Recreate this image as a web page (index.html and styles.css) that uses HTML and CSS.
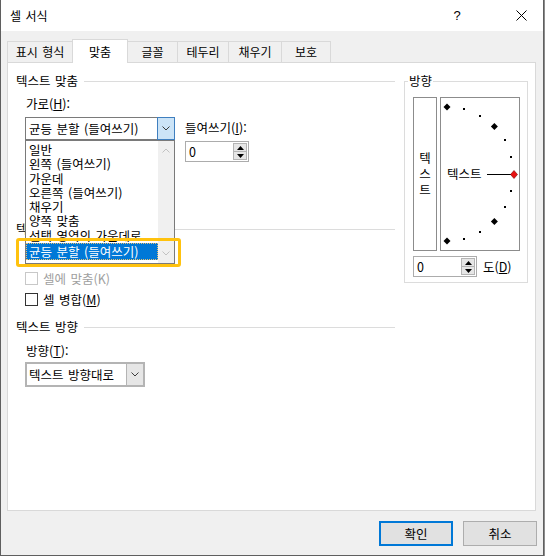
FILE: index.html
```html
<!DOCTYPE html>
<html lang="ko">
<head>
<meta charset="utf-8">
<title>셀 서식</title>
<link rel="stylesheet" href="styles.css">
</head>
<body>
<div class="window">
  <div class="titlebar">
    <span class="title">셀 서식</span>
    <span class="tb-help">?</span>
    <span class="tb-close">
      <svg width="11" height="11" viewBox="0 0 11 11"><path d="M0.5 0.5 L10.5 10.5 M10.5 0.5 L0.5 10.5" stroke="#000" stroke-width="1" fill="none"/></svg>
    </span>
  </div>
  <div class="body">
    <div class="tabs">
      <div class="tab t1">표시 형식</div>
      <div class="tab t2 active">맞춤</div>
      <div class="tab t3">글꼴</div>
      <div class="tab t4">테두리</div>
      <div class="tab t5">채우기</div>
      <div class="tab t6">보호</div>
    </div>
    <div class="panel">
      <div class="left">
        <div class="sec"><span>텍스트 맞춤</span><i></i></div>
        <div class="lbl">가로(<u>H</u>):</div>
        <div class="hrow">
          <div class="combo-wrap">
            <div class="combo">
              <span class="combo-text">균등 분할 (들여쓰기)</span>
              <span class="combo-btn"><svg width="8" height="5" viewBox="0 0 8 5"><path d="M0.5 0.5 L4 4 L7.5 0.5" stroke="#3c3c3c" fill="none"/></svg></span>
            </div>
            <div class="dropdown">
              <div class="items">
                <div class="item">일반</div>
                <div class="item">왼쪽 (들여쓰기)</div>
                <div class="item">가운데</div>
                <div class="item">오른쪽 (들여쓰기)</div>
                <div class="item">채우기</div>
                <div class="item">양쪽 맞춤</div>
                <div class="item">선택 영역의 가운데로</div>
                <div class="item sel">균등 분할 (들여쓰기)</div>
              </div>
              <div class="sbar">
                <svg width="8" height="5" viewBox="0 0 8 5"><path d="M0.5 4.5 L4 1 L7.5 4.5" stroke="#c2c2c2" fill="none"/></svg>
                <svg width="8" height="5" viewBox="0 0 8 5"><path d="M0.5 0.5 L4 4 L7.5 0.5" stroke="#c2c2c2" fill="none"/></svg>
              </div>
            </div>
            <div class="highlight"></div>
          </div>
          <div class="indent">
            <div class="lbl2">들여쓰기(<u>I</u>):</div>
            <div class="spin">
              <span class="spin-val">0</span>
              <span class="spin-btns">
                <span class="spin-b"><svg width="7" height="4" viewBox="0 0 7 4"><path d="M0 4 L3.5 0 L7 4 Z" fill="#000"/></svg></span>
                <span class="spin-b"><svg width="7" height="4" viewBox="0 0 7 4"><path d="M0 0 L3.5 4 L7 0 Z" fill="#000"/></svg></span>
              </span>
            </div>
          </div>
        </div>
        <div class="sec sec2"><span>텍스트 조정</span><i></i></div>
        <div class="checks">
          <div class="chk disabled"><span class="box"></span><span>셀에 맞춤(K)</span></div>
          <div class="chk"><span class="box"></span><span>셀 병합(<u>M</u>)</span></div>
        </div>
        <div class="sec sec3"><span>텍스트 방향</span><i></i></div>
        <div class="lbl lbl3">방향(<u>T</u>):</div>
        <div class="combo2">
          <span class="combo2-text">텍스트 방향대로</span>
          <span class="combo2-btn"><svg width="8" height="5" viewBox="0 0 8 5"><path d="M0.5 0.5 L4 4 L7.5 0.5" stroke="#3c3c3c" fill="none"/></svg></span>
        </div>
      </div>
      <fieldset class="orient">
        <legend>방향</legend>
        <div class="orient-inner">
          <div class="orient-boxes">
            <div class="vtext"><span>텍</span><span>스</span><span>트</span></div>
            <div class="dial">
              <svg class="dial-svg" width="78" height="152" viewBox="0 0 78 152">
                <polygon points="6,5.5 9.5,9 6,12.5 2.5,9" fill="#000"/>
                <polygon points="53.4,25.1 56.9,28.6 53.4,32.1 49.9,28.6" fill="#000"/>
                <polygon points="53.4,119.9 56.9,123.4 53.4,126.9 49.9,123.4" fill="#000"/>
                <polygon points="6,139.5 9.5,143 6,146.5 2.5,143" fill="#000"/>
                <rect x="22" y="10" width="2" height="2" fill="#000"/>
                <rect x="38" y="17" width="2" height="2" fill="#000"/>
                <rect x="63" y="41" width="2" height="2" fill="#000"/>
                <rect x="69" y="58" width="2" height="2" fill="#000"/>
                <rect x="69" y="92" width="2" height="2" fill="#000"/>
                <rect x="63" y="108" width="2" height="2" fill="#000"/>
                <rect x="38" y="133" width="2" height="2" fill="#000"/>
                <rect x="22" y="140" width="2" height="2" fill="#000"/>
                <line x1="46" y1="76.5" x2="71" y2="76.5" stroke="#000" stroke-width="1"/>
                <polygon points="73,72.5 76.5,76.5 73,80.5 69.5,76.5" fill="#e81010" stroke="#7a0000" stroke-width="0.6"/>
              </svg>
              <span class="dial-text">텍스트</span>
            </div>
          </div>
          <div class="deg-row">
            <div class="spin">
              <span class="spin-val">0</span>
              <span class="spin-btns">
                <span class="spin-b"><svg width="7" height="4" viewBox="0 0 7 4"><path d="M0 4 L3.5 0 L7 4 Z" fill="#000"/></svg></span>
                <span class="spin-b"><svg width="7" height="4" viewBox="0 0 7 4"><path d="M0 0 L3.5 4 L7 0 Z" fill="#000"/></svg></span>
              </span>
            </div>
            <span>도(<u>D</u>)</span>
          </div>
        </div>
      </fieldset>
    </div>
    <div class="buttons">
      <button class="btn primary">확인</button>
      <button class="btn">취소</button>
    </div>
  </div>
</div>
</body>
</html>
```
FILE: styles.css
```css
* { box-sizing: border-box; }
html { background: #8c8c8c; }
body {
  margin: 0;
  font-family: "Noto Sans CJK KR", "Noto Sans", sans-serif;
  font-size: 12.5px;
  line-height: 16px;
  word-spacing: 1px;
  color: #000;
}
u { text-decoration: underline; text-underline-offset: 1px; }

.window {
  width: 544px;
  height: 556px;
  border: 1px solid #5f5f5f;
  border-top: none;
  background: #f0f0f0;
  display: flex;
  flex-direction: column;
}
.titlebar {
  height: 31px;
  flex: none;
  background: #fff;
  display: flex;
  align-items: center;
  padding-left: 9px;
  font-size: 12px;
}
.title { flex: 1; }
.tb-help {
  width: 46px;
  text-align: center;
  font-family: "Liberation Sans", sans-serif;
  font-size: 13px;
}
.tb-close {
  width: 44px;
  margin-left: 19px;
  display: flex;
  justify-content: center;
  align-items: center;
}

.body {
  flex: 1;
  padding: 8px 6px 0 6px;
  display: flex;
  flex-direction: column;
}
.tabs {
  display: flex;
  align-items: flex-end;
  height: 23px;
  font-size: 12px;
}
.tab {
  height: 21px;
  border: 1px solid #d9d9d9;
  border-bottom: none;
  margin-right: -1px;
  display: flex;
  align-items: center;
  justify-content: center;
  background: #f0f0f0;
}
.tab.active {
  height: 24px;
  margin-bottom: -1px;
  background: #fff;
  position: relative;
  z-index: 1;
}
.t1 { width: 66px; }
.t2 { width: 56px; }
.t3 { width: 51px; }
.t4 { width: 52px; }
.t5 { width: 54px; }
.t6 { width: 50px; }

.panel {
  width: 529px;
  height: 449px;
  flex: none;
  border: 1px solid #d9d9d9;
  background: #fff;
  display: grid;
  grid-template-columns: 379px 124px;
  column-gap: 9px;
  align-items: start;
  padding: 10px 0 0 8px;
}

.sec {
  display: flex;
  align-items: center;
  height: 16px;
}
.sec i {
  flex: 1;
  height: 1px;
  background: #dcdcdc;
  margin-left: 6px;
}
.lbl { margin: 7px 0 0 10px; }
.hrow {
  display: flex;
  align-items: flex-start;
  margin-top: 5px;
  margin-left: 9px;
}
.combo-wrap {
  position: relative;
  width: 150px;
}
.combo {
  width: 150px;
  height: 23px;
  border: 1px solid #7a7a7a;
  background: #fff;
  display: flex;
}
.combo-text {
  flex: 1;
  padding-left: 3px;
  line-height: 21px;
  white-space: nowrap;
}
.combo-btn {
  width: 18px;
  flex: none;
  margin: -1px -1px -1px 0;
  background: #cce4f7;
  border: 1px solid #3f7fbf;
  display: flex;
  align-items: center;
  justify-content: center;
}
.dropdown {
  position: absolute;
  left: 0;
  top: 23px;
  width: 150px;
  height: 124px;
  border: 1px solid #7a7a7a;
  background: #fff;
  display: flex;
  z-index: 3;
}
.items {
  flex: 1;
  min-width: 0;
  padding-top: 2px;
}
.item {
  height: 14.3px;
  line-height: 14.3px;
  padding-left: 3px;
  white-space: nowrap;
}
.item.sel {
  height: 17px;
  line-height: 15px;
  padding-left: 2px;
  background: #0078d7;
  color: #fff;
  border: 1px dotted #e8c070;
}
.sbar {
  width: 16px;
  flex: none;
  background: #f0f0f0;
  display: flex;
  flex-direction: column;
  justify-content: space-between;
  align-items: center;
  padding: 7px 0;
}
.highlight {
  position: absolute;
  left: -9px;
  top: 121px;
  width: 165px;
  height: 29px;
  border: 3px solid #ffc20e;
  border-radius: 3px;
  z-index: 4;
}
.indent {
  margin-left: 10px;
  padding-top: 3px;
}
.lbl2 { height: 16px; }
.indent .spin { margin-top: 5px; }
.spin {
  width: 64px;
  height: 21px;
  border: 1px solid #acacac;
  background: #fff;
  display: flex;
}
.spin-val {
  flex: 1;
  padding-left: 3px;
  line-height: 19px;
}
.spin-btns {
  width: 16px;
  display: flex;
  flex-direction: column;
  padding: 1px;
}
.spin-b {
  flex: 1;
  background: #e6e6e6;
  border: 1px solid #b4b4b4;
  display: flex;
  align-items: center;
  justify-content: center;
}
.spin-b + .spin-b { border-top: none; }

.sec2 { margin-top: 59px; }
.checks { margin-top: 31px; }
.chk {
  display: flex;
  align-items: center;
  height: 21px;
  margin-left: 9px;
  gap: 5px;
}
.box {
  width: 13px;
  height: 13px;
  border: 1px solid #333;
  background: #fff;
}
.chk.disabled { color: #a0a0a0; }
.chk.disabled .box { border-color: #c8c8c8; }
.sec3 { margin-top: 9px; }
.lbl3 { margin-top: 8px; }
.combo2 {
  width: 120px;
  height: 25px;
  margin: 3px 0 0 9px;
  border: 2px solid #b4b4b4;
  background: #fff;
  display: flex;
}
.combo2-text {
  flex: 1;
  padding-left: 2px;
  line-height: 21px;
  white-space: nowrap;
}
.combo2-btn {
  width: 17px;
  flex: none;
  background: #e6e6e6;
  border-left: 1px solid #b4b4b4;
  display: flex;
  align-items: center;
  justify-content: center;
}

.orient {
  margin: 0;
  width: 124px;
  padding: 8px 7px 5px 0;
  border: 1px solid #dcdcdc;
  min-width: 0;
}
.orient legend {
  margin-left: 3px;
  padding: 0 1px;
  line-height: 16px;
}
.orient-inner { margin-left: 8px; }
.orient-boxes {
  display: flex;
  gap: 3px;
}
.vtext {
  width: 24px;
  height: 154px;
  border: 1px solid #8c8c8c;
  display: flex;
  flex-direction: column;
  align-items: center;
  justify-content: center;
}
.dial {
  position: relative;
  width: 80px;
  height: 154px;
  border: 1px solid #8c8c8c;
}
.dial-svg { display: block; }
.dial-text {
  position: absolute;
  left: 6px;
  top: 68px;
  line-height: 16px;
}
.deg-row {
  display: flex;
  align-items: center;
  gap: 6px;
  margin-top: 5px;
}

.buttons {
  display: flex;
  justify-content: flex-end;
  gap: 10px;
  margin-top: 10px;
}
.btn {
  width: 74px;
  height: 25px;
  padding: 0;
  background: #e1e1e1;
  border: 1px solid #adadad;
  font: inherit;
  color: #000;
}
.btn.primary { border: 2px solid #0078d7; }
```
